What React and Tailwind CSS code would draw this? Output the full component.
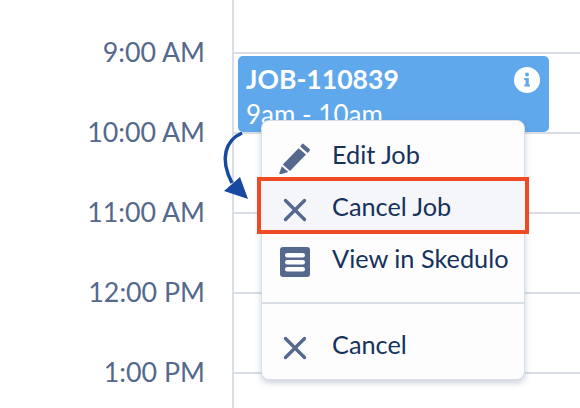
const hours = ['9:00 AM', '10:00 AM', '11:00 AM', '12:00 PM', '1:00 PM'];

const CrossIcon = () => (
  <svg width="24" height="24" viewBox="0 0 24 24" className="text-[#54698d]">
    <path d="M2.5 2.5 L21.5 21.5 M21.5 2.5 L2.5 21.5" stroke="currentColor" strokeWidth="3.4" strokeLinecap="round" fill="none" />
  </svg>
);

const PencilIcon = () => (
  <svg width="32" height="32" viewBox="0 0 32 32">
    <path d="M24 1.5 L30.5 7 Q31.5 8 30.5 9 L28.6 11 L21.2 4.6 L23 2 Q23.5 1.3 24 1.5 Z" fill="#54698d" />
    <path d="M19.6 6.2 L27 12.6 L11 29 L3.8 22.6 Z" fill="#54698d" />
    <path d="M2.8 24.2 L9.3 30 L1 32.5 Q0 32.5 0.4 31 Z" fill="#54698d" />
  </svg>
);

const ListIcon = () => (
  <svg width="30" height="30" viewBox="0 0 30 30">
    <rect width="30" height="30" rx="3" fill="#54698d" />
    <rect x="5" y="6" width="20" height="4.5" rx="2.2" fill="#fdfdfe" />
    <rect x="5" y="13" width="20" height="4.5" rx="2.2" fill="#fdfdfe" />
    <rect x="5" y="20" width="20" height="4.5" rx="2.2" fill="#fdfdfe" />
  </svg>
);

const InfoIcon = () => (
  <svg width="26" height="26" viewBox="0 0 26 26" className="mt-[6px] mr-[1px]">
    <circle cx="13" cy="13" r="13" fill="#fff" />
    <circle cx="13" cy="7.6" r="2" fill="#5fa8ec" />
    <path d="M10.3 11 H14.8 V17.6 H16 V19.6 H10.3 V17.6 H11.6 V13 H10.3 Z" fill="#5fa8ec" />
  </svg>
);

const Arrow = () => (
  <svg width="36" height="78" viewBox="0 0 36 78" className="absolute left-[218px] top-[130px]">
    <path d="M24 3 C8 10 1 28 14 53" stroke="#16499f" strokeWidth="3.5" fill="none" />
    <path d="M6 61 L30 69 L22 47 Z" fill="#16499f" />
  </svg>
);

const MenuItem = ({ icon, label, className }) => (
  <div className={`flex items-center ${className}`}>
    <div className="w-[70px] flex justify-center pr-1 mt-[6px]">{icon}</div>
    <span>{label}</span>
  </div>
);

export default function App() {
  return (
    <div className="relative h-[408px] w-[580px] overflow-hidden bg-white font-['Lato','Open_Sans',sans-serif]">
      <div className="flex h-full">
        {/* Hour labels */}
        <div className="w-[232px] pt-[12px]">
          {hours.map((h) => (
            <div key={h} className="flex h-20 items-center justify-end pr-[27px] text-[26.8px] text-[#54698d]">
              {h}
            </div>
          ))}
        </div>
        {/* Grid lines */}
        <div className="flex-1 border-l-2 border-[#d8dde6] pt-[52px]">
          {hours.map((h) => (
            <div key={h} className="h-20 border-t-2 border-[#d8dde6]" />
          ))}
        </div>
      </div>

      {/* Job card */}
      <div className="absolute left-[238px] top-[56px] flex h-[76px] w-[311px] justify-between rounded-[5px] bg-[#5fa8ec] px-2 pt-[5px] text-white">
        <div>
          <div className="text-[26.6px] leading-[36px] font-bold">JOB-110839</div>
          <div className="text-[26px] leading-[34px]">9am - 10am</div>
        </div>
        <InfoIcon />
      </div>

      <Arrow />

      {/* Context menu */}
      <div className="absolute left-[261px] top-[120px] h-[260px] w-[264px] rounded-[8px] border border-[#d8dde6] bg-[#fdfdfe] text-[25.3px] text-[#16325c] shadow-[0_3px_6px_rgba(84,105,141,0.3)]">
        <MenuItem icon={<PencilIcon />} label="Edit Job" className="h-[61px] pt-[7px]" />
        <MenuItem icon={<ListIcon />} label="View in Skedulo" className="mt-[51px] h-[52px]" />
        <div className="mt-[17px] border-t-2 border-[#d8dde6]" />
        <MenuItem icon={<CrossIcon />} label="Cancel" className="mt-[15px] h-[52px]" />
      </div>

      {/* Highlighted item */}
      <div className="absolute left-[257px] top-[177px] flex h-[57px] w-[272px] items-center border-[4px] border-[#f04a25] bg-[#f4f6f9] pt-[3px] text-[25.3px] text-[#16325c]">
        <div className="w-[71px] flex justify-center pr-1 mt-[6px]"><CrossIcon /></div>
        <span>Cancel Job</span>
      </div>
    </div>
  );
}
